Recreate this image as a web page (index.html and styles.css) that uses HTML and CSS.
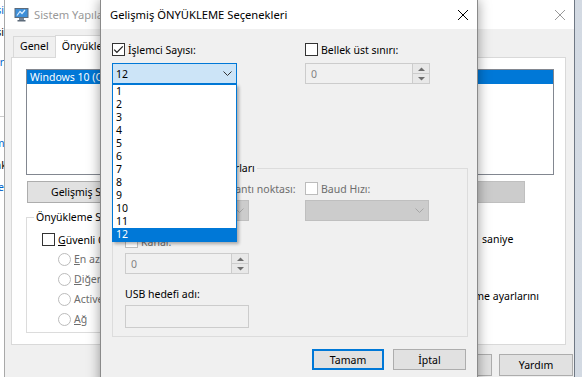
FILE: index.html
```html
<!DOCTYPE html>
<html lang="tr">
<head>
    <meta charset="UTF-8">
    <meta name="viewport" content="width=device-width, initial-scale=1.0">
    <title>Gelişmiş ÖNYÜKLEME Seçenekleri</title>
    <link rel="stylesheet" href="styles.css">
</head>
<body>
<div class="desk">

    <!-- window behind everything, only its right edge shows -->
    <div class="far-win">
        <div class="far-lines">
            <p class="lnk l1">Bilgisayar bilgisi</p>
            <p class="l2">Aygıt yöneticisi</p>
            <p class="lnk l3">Uzak ayarlar</p>
            <hr>
            <p class="lnk l4">Güvenlik ve Bakım</p>
            <p class="l5">Performans ve bakım</p>
            <p class="lnk l5">Windows Update</p>
        </div>
    </div>

    <!-- Sistem Yapılandırması -->
    <div class="win sys">
        <div class="title inactive">
            <svg class="app-ico" width="15" height="15" viewBox="0 0 15 15">
                <rect x="0.5" y="1" width="14" height="10" fill="#5d6b7a"/>
                <rect x="1.5" y="2" width="12" height="8" fill="#3f8fd8"/>
                <path d="M3 8.5l3-4 2 2 3-3.5" fill="none" stroke="#dcefff" stroke-width="1.2"/>
                <rect x="5" y="11" width="5" height="2" fill="#7a8796"/>
                <rect x="3.5" y="13" width="8" height="1.5" fill="#5d6b7a"/>
            </svg>
            <span>Sistem Yapılandırması</span>
            <svg class="x" width="10" height="10" viewBox="0 0 10 10"><path d="M0 0L10 10M10 0L0 10" stroke="currentColor" stroke-width="1"/></svg>
        </div>
        <div class="sys-body">
            <div class="tabs">
                <span class="tab">Genel</span>
                <span class="tab on">Önyükleme</span>
                <span class="tab">Hizmetler</span>
                <span class="tab">Başlangıç</span>
                <span class="tab">Araçlar</span>
            </div>
            <div class="panel">
                <div class="listbox">
                    <div class="li sel">Windows 10 (C:\WINDOWS) : Geçerli işletim sistemi; Varsayılan İS</div>
                </div>
                <div class="btn-row">
                    <button class="btn">Gelişmiş Seçenekler...</button>
                    <button class="btn">Varsayılan olarak ayarla</button>
                    <button class="btn dis del">Sil</button>
                </div>
                <div class="boot-row">
                    <fieldset class="grp boot-opts">
                        <legend>Önyükleme Seçenekleri</legend>
                        <label class="chk"><span class="box"></span><span><u>G</u>üvenli Önyükleme</span></label>
                        <div class="radios">
                            <label class="rad"><span class="dot"></span><span><u>E</u>n az</span></label>
                            <label class="rad"><span class="dot"></span><span><u>D</u>iğer kabuk</span></label>
                            <label class="rad"><span class="dot"></span><span>Active Directory onarımı</span></label>
                            <label class="rad"><span class="dot"></span><span><u>A</u>ğ</span></label>
                        </div>
                    </fieldset>
                    <div class="timeout">
                        <span class="lbl">Zaman aşımı:</span>
                        <div class="to-line"><div class="edit">30</div><span>saniye</span></div>
                        <label class="chk keep"><span class="box"></span><span>Tüm önyükleme ayarlarını kalıcı yap</span></label>
                    </div>
                </div>
            </div>
            <div class="sys-foot">
                <button class="btn">Tamam</button>
                <button class="btn">İptal</button>
                <button class="btn">Uygula</button>
                <button class="btn">Yardım</button>
            </div>
        </div>
    </div>

    <!-- Gelişmiş ÖNYÜKLEME Seçenekleri -->
    <div class="win dlg">
        <div class="title">
            <span>Gelişmiş ÖNYÜKLEME Seçenekleri</span>
            <svg class="x" width="10" height="10" viewBox="0 0 10 10"><path d="M0 0L10 10M10 0L0 10" stroke="currentColor" stroke-width="1"/></svg>
        </div>
        <div class="dlg-body">
            <div class="pair top-pair">
                <div class="field">
                    <label class="chk"><span class="box">
                        <svg width="11" height="11" viewBox="0 0 11 11"><path d="M1.2 5.6l2.7 2.8 5.9-6" fill="none" stroke="#222" stroke-width="1.3"/></svg>
                    </span>İşlemci Sayısı:</label>
                    <div class="combo open">
                        <span>12</span>
                        <svg width="9" height="5" viewBox="0 0 9 5"><path d="M.5.5l4 4 4-4" fill="none" stroke="#333"/></svg>
                    </div>
                </div>
                <div class="field">
                    <label class="chk"><span class="box"></span>Bellek üst sınırı:</label>
                    <div class="spin dis">
                        <span>0</span>
                        <div class="spin-btns">
                            <i><svg width="7" height="4" viewBox="0 0 7 4"><path d="M0 4L3.5 0.5 7 4z" fill="#6d6d6d"/></svg></i>
                            <i><svg width="7" height="4" viewBox="0 0 7 4"><path d="M0 0L3.5 3.5 7 0z" fill="#6d6d6d"/></svg></i>
                        </div>
                    </div>
                </div>
            </div>

            <fieldset class="grp dbg">
                <legend>Hata ayıklama ayarları</legend>
                <div class="pair">
                    <div class="field">
                        <label class="chk dis"><span class="box"></span>Hata ayıklama bağlantı noktası:</label>
                        <div class="combo dis"><span></span>
                            <svg width="9" height="5" viewBox="0 0 9 5"><path d="M.5.5l4 4 4-4" fill="none" stroke="#a6a6a6"/></svg>
                        </div>
                    </div>
                    <div class="field">
                        <label class="chk dis"><span class="box"></span>Baud Hızı:</label>
                        <div class="combo dis"><span></span>
                            <svg width="9" height="5" viewBox="0 0 9 5"><path d="M.5.5l4 4 4-4" fill="none" stroke="#a6a6a6"/></svg>
                        </div>
                    </div>
                </div>
                <div class="field kanal">
                    <label class="chk dis"><span class="box"></span>Kanal:</label>
                    <div class="spin dis">
                        <span>0</span>
                        <div class="spin-btns">
                            <i><svg width="7" height="4" viewBox="0 0 7 4"><path d="M0 4L3.5 0.5 7 4z" fill="#6d6d6d"/></svg></i>
                            <i><svg width="7" height="4" viewBox="0 0 7 4"><path d="M0 0L3.5 3.5 7 0z" fill="#6d6d6d"/></svg></i>
                        </div>
                    </div>
                </div>
                <div class="field usb">
                    <span class="lbl">USB hedefi adı:</span>
                    <div class="edit dis"></div>
                </div>
            </fieldset>

            <div class="dlg-foot">
                <button class="btn def">Tamam</button>
                <button class="btn">İptal</button>
            </div>

            <!-- open drop-down of the İşlemci Sayısı combo -->
            <ul class="droplist">
                <li>1</li>
                <li>2</li>
                <li>3</li>
                <li>4</li>
                <li>5</li>
                <li>6</li>
                <li>7</li>
                <li>8</li>
                <li>9</li>
                <li>10</li>
                <li>11</li>
                <li class="sel">12</li>
            </ul>
        </div>
    </div>

</div>
</body>
</html>
```

FILE: styles.css
```css
* { box-sizing: border-box; margin: 0; padding: 0; }
body {
    font-family: "Noto Sans", "Liberation Sans", sans-serif;
    font-size: 10.5px;
    line-height: 14px;
    color: #000;
    background: #c9d1dc;
    overflow: hidden;
}
button { font: inherit; color: inherit; }
fieldset { min-width: 0; }

.desk {
    position: relative;
    width: 582px;
    height: 377px;
    overflow: hidden;
    background: linear-gradient(90deg, #b9c2ce, #d3dae3);
}

/* window at the far left edge */
.far-win {
    position: absolute;
    left: 0;
    top: 0;
    width: 5px;
    height: 377px;
    background: #fff;
    overflow: hidden;
}
.far-lines { width: 90px; margin-left: -86px; text-align: right; white-space: nowrap; padding-top: 3px; }
.far-lines p { height: 14px; }
.far-lines .lnk { color: #0066cc; }
.far-lines .l2 { margin-top: 8px; }
.far-lines .l3 { margin-top: 16px; }
.far-lines hr { border: none; border-top: 1px solid #ccc; margin: 47px 0 19px; }
.far-lines .l5 { margin-top: 8px; }

/* windows */
.win {
    position: absolute;
    top: 0;
    height: 420px;
    background: #f0f0f0;
}
.title {
    height: 29px;
    background: #fff;
    display: flex;
    align-items: center;
    padding-left: 9px;
    font-size: 11.2px;
    white-space: nowrap;
}
.title .x { margin-left: auto; margin-right: 9px; color: #000; }
.title.inactive { color: #999; }
.title.inactive .x { color: #999; }
.app-ico { margin-right: 5px; flex: none; }

.sys {
    left: 4px;
    width: 571px;
    border-left: 1px solid #a9a9a9;
    border-right: 1px solid #6f7884;
}
.sys-body { padding: 6px 0 0 6px; }
.tabs {
    display: flex;
    align-items: flex-end;
    height: 22px;
    padding-left: 2px;
}
.tab {
    height: 21px;
    padding: 0 6px;
    line-height: 19px;
    border: 1px solid #d9d9d9;
    border-bottom: none;
    margin-right: -1px;
    background: #f0f0f0;
    white-space: nowrap;
}
.tab.on {
    position: relative;
    height: 23px;
    margin-bottom: -1px;
    background: #fff;
    line-height: 20px;
}
.panel {
    width: 555px;
    height: 288px;
    background: #fff;
    border: 1px solid #d9d9d9;
    padding: 11px 0 0 14px;
}
.listbox {
    width: 528px;
    height: 106px;
    border: 1px solid #828790;
    padding: 0;
    overflow: hidden;
}
.li { height: 14px; padding-left: 3px; white-space: nowrap; }
.li.sel { background: #0078d7; color: #fff; }

.btn-row { display: flex; gap: 8px; margin-top: 6px; padding-left: 1px; width: 528px; }
.btn {
    height: 22px;
    background: #e1e1e1;
    border: 1px solid #adadad;
    padding: 0 23px;
    white-space: nowrap;
}
.btn.dis { background: #cccccc; border-color: #bfbfbf; color: #a0a0a0; }
.btn.del { margin-left: auto; margin-right: 29px; width: 140px; padding: 0; }

.boot-row {
    display: grid;
    grid-template-columns: 360px 1fr;
    column-gap: 9px;
    margin-top: 7px;
}
.grp {
    border: 1px solid #dcdcdc;
}
.grp legend { line-height: 14px; padding: 0 2px; }
.boot-opts { height: 123px; padding: 9px 14px 0 15px; }
.boot-opts legend { margin-left: -8px; }
.radios { margin: 3px 0 0 16px; }
.rad {
    display: flex;
    align-items: center;
    gap: 3px;
    height: 20px;
    color: #6d6d6d;
}
.dot {
    width: 13px;
    height: 13px;
    border: 1px solid #bcbcbc;
    border-radius: 50%;
    flex: none;
}

.timeout { display: flex; flex-direction: column; }
.to-line { display: flex; align-items: center; gap: 5px; margin-top: 4px; }
.to-line .edit { width: 82px; height: 21px; border: 1px solid #7a7a7a; background: #fff; padding-left: 4px; line-height: 19px; }

/* check box */
.chk {
    display: flex;
    align-items: center;
    gap: 3px;
    height: 13px;
    white-space: nowrap;
}
.chk.keep { margin-top: 40px; align-items: flex-start; height: auto; width: 150px; white-space: normal; }
.box {
    width: 13px;
    height: 13px;
    border: 1px solid #333;
    background: #fff;
    flex: none;
    display: flex;
    align-items: center;
    justify-content: center;
}
.chk.dis { color: #6d6d6d; }
.chk.dis .box { border-color: #bcbcbc; }

/* dialog */
.dlg {
    left: 100px;
    width: 378px;
    border-left: 1px solid #8a8a8a;
    border-right: 1px solid #8a8a8a;
    box-shadow: 0 0 12px rgba(0, 0, 0, 0.4);
    z-index: 2;
}
.dlg-body { position: relative; padding: 14px 9px 0 11px; }
.pair { display: grid; grid-template-columns: 125px 125px; column-gap: 68px; }
.combo, .spin {
    height: 21px;
    margin-top: 7px;
    display: flex;
    align-items: center;
    padding-left: 3px;
    border: 1px solid #adadad;
}
.combo svg { margin-left: auto; margin-right: 4px; }
.combo.open { background: #cce4f7; border-color: #0078d7; }
.combo.dis { background: #cccccc; border-color: #bfbfbf; }
.spin.dis { background: #f0f0f0; border-color: #cccccc; color: #838383; padding-left: 5px; }
.spin-btns {
    margin-left: auto;
    width: 17px;
    height: 19px;
    display: flex;
    flex-direction: column;
    border-left: 1px solid #cccccc;
}
.spin-btns i {
    flex: 1;
    display: flex;
    align-items: center;
    justify-content: center;
    background: #e8e8e8;
}
.spin-btns i + i { border-top: 1px solid #cccccc; }

.dbg {
    margin-top: 77px;
    height: 176px;
    padding: 7px 12px 0 12px;
}
.dbg legend { margin-left: 18px; }
.dbg .pair { grid-template-columns: 124px 124px; column-gap: 56px; }
.dbg .combo { margin-top: 5px; }
.kanal { width: 124px; margin-top: 14px; }
.kanal .spin { margin-top: 5px; }
.usb { width: 124px; margin-top: 13px; }
.lbl { display: block; height: 14px; white-space: nowrap; }
.edit.dis { height: 23px; margin-top: 4px; border: 1px solid #cccccc; background: #f0f0f0; }

.dlg-foot {
    display: flex;
    justify-content: flex-end;
    gap: 9px;
    margin-top: 12px;
    padding-right: 2px;
}
.dlg-foot .btn { width: 73px; height: 21px; padding: 0; }
.btn.def { border: 2px solid #0078d7; width: 72px; }

.sys-foot {
    display: flex;
    justify-content: flex-end;
    gap: 7px;
    margin-top: 9px;
    width: 562px;
}
.sys-foot .btn { width: 74px; padding: 0; }

/* drop-down list */
.droplist {
    position: absolute;
    left: 11px;
    top: 55px;
    width: 125px;
    list-style: none;
    background: #fff;
    border: 1px solid #0078d7;
    box-shadow: 2px 2px 3px rgba(0, 0, 0, 0.3);
    z-index: 3;
}
.droplist li { height: 13px; line-height: 13px; padding-left: 3px; }
.droplist li.sel { background: #0078d7; color: #fff; }
```
